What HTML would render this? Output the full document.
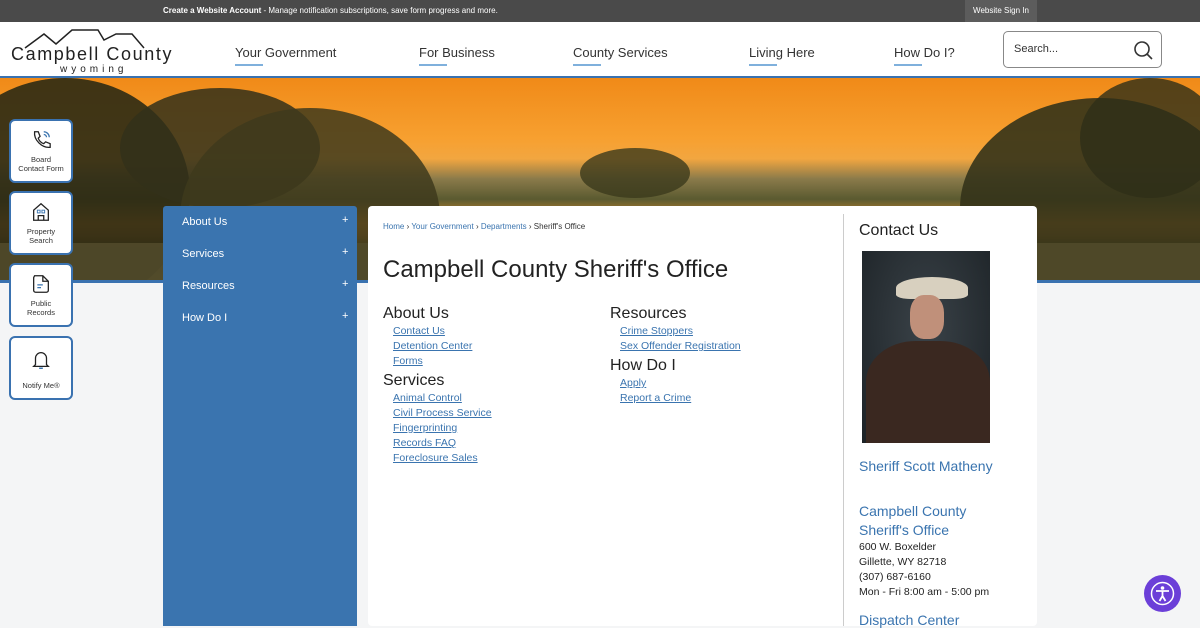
<!DOCTYPE html>
<html><head><meta charset="utf-8"><style>
*{box-sizing:border-box;margin:0;padding:0}
body{width:1200px;height:620px;overflow:hidden;background:#f4f5f6;font-family:"Liberation Sans",sans-serif;position:relative}
.top{height:22px;background:#4a4a4a;color:#fff;font-size:8px;line-height:22px;position:relative}
.top .c{position:absolute;left:163px}
.top .s{position:absolute;left:965px;width:72px;background:#5c5c5c;text-align:center}
.hdr{height:56px;background:#fff;position:relative;border-bottom:2px solid #3a72b0}
.nav a{position:absolute;top:23px;font-size:13px;color:#333;text-decoration:none}
.nav a:after{content:"";position:absolute;left:0;top:19px;width:28px;height:2px;background:#7fb0dc}
.search{position:absolute;left:1003px;top:9px;width:159px;height:37px;border:1px solid #888;border-radius:5px;font-size:11px;color:#333;padding:11px 10px}
.hero{position:absolute;top:78px;left:0;width:1200px;height:205px;background:linear-gradient(180deg,#f08a18 0%,#f7a030 30%,#f2a640 40%,#8a7a4a 50%,#5a5a30 60%,#e89228 72%,#c07a28 78%,#4a4a22 85%,#5c5030 100%);border-bottom:3px solid #3a72b0;overflow:hidden}
.tree{position:absolute;border-radius:50%}
.qb{position:absolute;left:9px;width:64px;height:64px;background:#fff;border:2px solid #3a72b0;border-radius:6px;text-align:center;font-size:7.5px;color:#333;line-height:9px}
.qb svg{display:block;margin:8px auto 4px}
.side{position:absolute;left:163px;top:206px;width:194px;height:420px;background:#3a74af;border-radius:3px 3px 0 0}
.side div{position:absolute;left:19px;color:#fff;font-size:11px}
.side span{position:absolute;left:179px;color:#fff;font-size:11px}
.main{position:absolute;left:368px;top:206px;width:669px;height:420px;background:#fff;border-radius:4px}
.bc{position:absolute;left:15px;top:16px;font-size:8px;color:#333}
.bc a{color:#3a74af}
h1{position:absolute;left:15px;top:50px;font-size:24px;font-weight:normal;color:#222}
.col{position:absolute;font-size:10.5px;line-height:15px}
.col h2{font-size:16px;font-weight:normal;color:#222;line-height:20px;margin-bottom:0}
.col a{display:block;color:#3a74af;margin-left:10px;text-decoration:underline}
.vr{position:absolute;left:475px;top:8px;width:1px;height:412px;background:#ccc}
.ct{position:absolute;left:491px}
</style></head><body>
<div class="top"><span class="c"><b>Create a Website Account</b> - Manage notification subscriptions, save form progress and more.</span><span class="s">Website Sign In</span></div>
<div class="hdr">
<svg style="position:absolute;left:20px;top:4px" width="150" height="24"><path d="M5 22 L24 8 L36 18 L52 4 L78 4 L84 14 L96 8 L112 8 L124 22" fill="none" stroke="#222" stroke-width="1.5"/></svg>
<div style="position:absolute;left:11px;top:22px;font-size:18px;color:#222;letter-spacing:1.6px">Campbell County</div>
<div style="position:absolute;left:60px;top:42px;font-size:10px;color:#222;letter-spacing:4px">wyoming</div>
<div class="nav"><a style="left:235px">Your Government</a><a style="left:419px">For Business</a><a style="left:573px">County Services</a><a style="left:749px">Living Here</a><a style="left:894px">How Do I?</a></div>
<div class="search">Search...<svg style="position:absolute;right:8px;top:8px" width="20" height="20"><circle cx="9" cy="9" r="7" fill="none" stroke="#333" stroke-width="1.6"/><path d="M14 14l5 5" stroke="#333" stroke-width="1.6"/></svg></div>
</div>
<div class="hero">
<div class="tree" style="left:-60px;top:0px;width:250px;height:230px;background:#2c2a14;opacity:.9"></div>
<div class="tree" style="left:120px;top:10px;width:200px;height:120px;background:#33301a;opacity:.85"></div>
<div class="tree" style="left:180px;top:30px;width:260px;height:220px;background:#3e3a1c;opacity:.85"></div>
<div class="tree" style="left:960px;top:20px;width:280px;height:220px;background:#34331a;opacity:.9"></div>
<div class="tree" style="left:1080px;top:0px;width:140px;height:120px;background:#2e2e18;opacity:.8"></div>
<div class="tree" style="left:580px;top:70px;width:110px;height:50px;background:#3b3a1c;opacity:.8"></div>
<div style="position:absolute;left:0;top:165px;width:1200px;height:40px;background:#514a2a;opacity:.9"></div>
</div>
<div class="qb" style="top:119px"><svg width="22" height="22" viewBox="0 0 24 24"><path d="M5 3l4 0 2 5-2 2c1 3 3 5 6 6l2-2 5 2v4c-9 1-18-8-17-17z" fill="none" stroke="#222" stroke-width="1.4"/><path d="M15 3a6 6 0 0 1 6 6M15 6a3 3 0 0 1 3 3" fill="none" stroke="#3a74af" stroke-width="1.4"/></svg>Board<br>Contact Form</div>
<div class="qb" style="top:191px"><svg width="22" height="22" viewBox="0 0 24 24"><path d="M4 21V10l8-7 8 7v11z M9 21v-5h6v5" fill="none" stroke="#222" stroke-width="1.4"/><rect x="8" y="10" width="3" height="3" fill="none" stroke="#3a74af"/><rect x="13" y="10" width="3" height="3" fill="none" stroke="#3a74af"/></svg>Property<br>Search</div>
<div class="qb" style="top:263px"><svg width="22" height="22" viewBox="0 0 24 24"><path d="M5 3h9l6 6v10a2 2 0 0 1-2 2H6a2 2 0 0 1-2-2V5z M14 3v6h6" fill="none" stroke="#222" stroke-width="1.4"/><path d="M8 13h6M8 16h4" stroke="#3a74af" stroke-width="1.4"/></svg>Public<br>Records</div>
<div class="qb" style="top:336px"><svg width="22" height="22" viewBox="0 0 24 24" style="margin-top:11px;margin-bottom:10px"><path d="M6 17V10a6 6 0 0 1 12 0v7l2 2H4z" fill="none" stroke="#222" stroke-width="1.4"/><path d="M10 21h4" stroke="#3a74af" stroke-width="1.6"/></svg>Notify Me®</div>
<div class="side"><div style="top:10px">About Us</div><span style="top:8px">+</span><div style="top:42px">Services</div><span style="top:40px">+</span><div style="top:74px">Resources</div><span style="top:72px">+</span><div style="top:106px">How Do I</div><span style="top:104px">+</span></div>
<div class="main">
<div class="bc"><a>Home</a> › <a>Your Government</a> › <a>Departments</a> › Sheriff's Office</div>
<h1>Campbell County Sheriff's Office</h1>
<div class="col" style="left:15px;top:98px"><h2>About Us</h2><a>Contact Us</a><a>Detention Center</a><a>Forms</a><h2 style="margin-top:2px">Services</h2><a>Animal Control</a><a>Civil Process Service</a><a>Fingerprinting</a><a>Records FAQ</a><a>Foreclosure Sales</a></div>
<div class="col" style="left:242px;top:98px"><h2>Resources</h2><a>Crime Stoppers</a><a>Sex Offender Registration</a><h2 style="margin-top:2px">How Do I</h2><a>Apply</a><a>Report a Crime</a></div>
<div class="vr"></div>
<div class="ct" style="top:16px;font-size:16px;color:#222">Contact Us</div>
<div style="position:absolute;left:494px;top:45px;width:128px;height:192px;background:radial-gradient(ellipse at 50% 40%,#3a4248,#1c2226);overflow:hidden">
<div style="position:absolute;left:34px;top:26px;width:72px;height:22px;background:#d8d0bf;border-radius:50% 50% 20% 20%"></div>
<div style="position:absolute;left:48px;top:44px;width:34px;height:44px;background:#c0907a;border-radius:40%"></div>
<div style="position:absolute;left:4px;top:90px;width:124px;height:102px;background:#3a2820;border-radius:40% 40% 0 0"></div>
</div>
<div class="ct" style="top:252px;font-size:14px;color:#3a74af">Sheriff Scott Matheny</div>
<div class="ct" style="top:296px;font-size:14px;color:#3a74af;line-height:19px">Campbell County<br>Sheriff's Office</div>
<div class="ct" style="top:334px;font-size:10.5px;color:#222;line-height:15px">600 W. Boxelder<br>Gillette, WY 82718<br>(307) 687-6160<br>Mon - Fri 8:00 am - 5:00 pm</div>
<div class="ct" style="top:406px;font-size:14px;color:#3a74af">Dispatch Center</div>
</div>
<div style="position:absolute;left:1144px;top:575px;width:37px;height:37px;border-radius:50%;background:#6b3fd8"><svg width="37" height="37"><circle cx="18.5" cy="18.5" r="11" fill="none" stroke="#fff" stroke-width="1.5"/><circle cx="18.5" cy="13" r="1.8" fill="#fff"/><path d="M12 16h13M18.5 16v5l-3 5M18.5 21l3 5" stroke="#fff" stroke-width="1.8" fill="none"/></svg></div>
</body></html>
